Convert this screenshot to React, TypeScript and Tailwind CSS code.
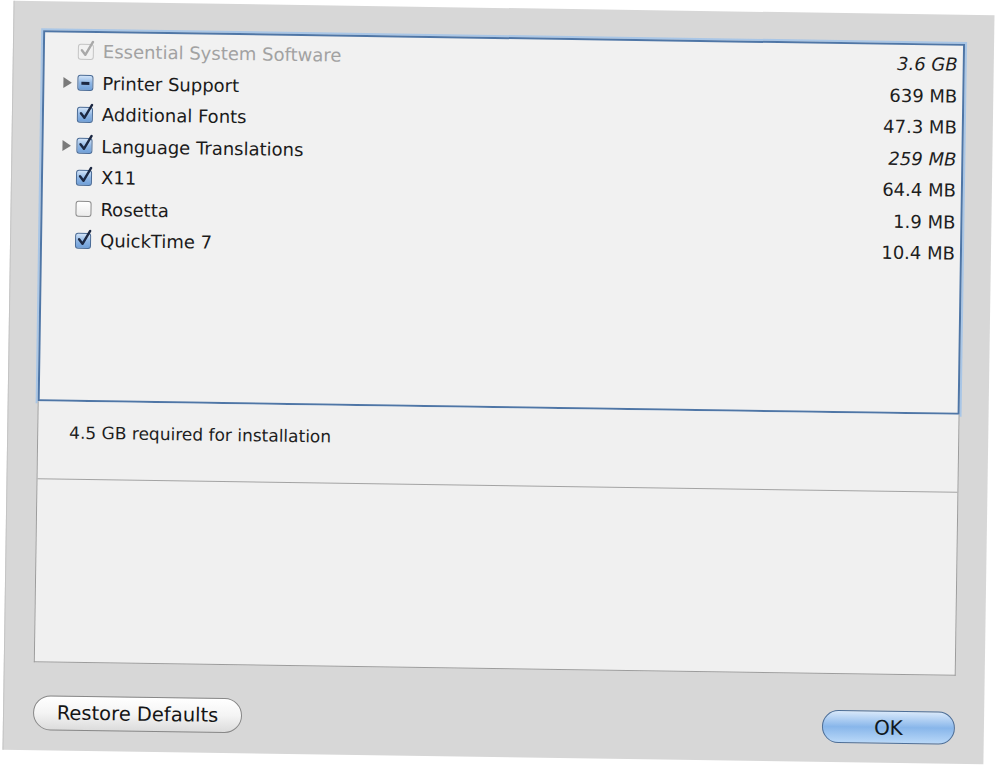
import React from 'react';

type CheckState = 'checked' | 'mixed' | 'unchecked' | 'disabled';

interface Item {
  name: string;
  size: string;
  state: CheckState;
  expandable?: boolean;
  italicSize?: boolean;
}

const items: Item[] = [
  { name: 'Essential System Software', size: '3.6 GB', state: 'disabled', italicSize: true },
  { name: 'Printer Support', size: '639 MB', state: 'mixed', expandable: true },
  { name: 'Additional Fonts', size: '47.3 MB', state: 'checked' },
  { name: 'Language Translations', size: '259 MB', state: 'checked', expandable: true, italicSize: true },
  { name: 'X11', size: '64.4 MB', state: 'checked' },
  { name: 'Rosetta', size: '1.9 MB', state: 'unchecked' },
  { name: 'QuickTime 7', size: '10.4 MB', state: 'checked' },
];

function CheckBox({ state }: { state: CheckState }) {
  const box =
    state === 'unchecked'
      ? 'border-[#8c8c8c] bg-gradient-to-b from-white to-[#ececec]'
      : state === 'disabled'
        ? 'border-[#c4c4c4] bg-[#f2f2f2]'
        : 'border-[#4a6b96] bg-gradient-to-b from-[#d2e4f8] via-[#8fb6e4] to-[#6f9fd8]';

  return (
    <div className="relative h-4 w-4 shrink-0">
      <div className={`h-4 w-4 rounded-[3px] border ${box}`} />
      {state === 'mixed' && (
        <div className="absolute left-[4px] top-[7px] h-[2.5px] w-[8px] bg-[#1c2842]" />
      )}
      {(state === 'checked' || state === 'disabled') && (
        <svg className="absolute -top-[4px] left-[1px]" width="18" height="18" viewBox="0 0 18 18">
          <path
            d="M3 10.5 L6.5 15 L14 2"
            fill="none"
            stroke={state === 'disabled' ? '#a9a9a9' : '#1c2842'}
            strokeWidth="2.4"
            strokeLinecap="round"
            strokeLinejoin="round"
          />
        </svg>
      )}
    </div>
  );
}

function Disclosure() {
  return (
    <svg width="10" height="12" viewBox="0 0 10 12">
      <path d="M1 0.5 L9.5 6 L1 11.5 Z" fill="#7a7a7a" />
    </svg>
  );
}

export default function App() {
  return (
    <div className="min-h-screen bg-white pl-[8px] pt-[8px]" style={{ fontFamily: '"DejaVu Sans", Verdana, sans-serif' }}>
      <div className="flex h-[749px] w-[981px] rotate-[0.85deg] flex-col border-l border-[#c4c4c4] bg-[#d7d7d7] px-[29px] pb-[20px] pt-[29px]">
        {/* component list */}
        <div className="h-[371px] border-2 border-[#4f76a6] bg-[#f1f1f1] pt-[3px] pr-[5px] shadow-[0_0_0_2px_#a9c6e6]">
          {items.map((item) => (
            <div key={item.name} className="flex h-[31.5px] items-center">
              <div className="flex w-[33px] justify-end pr-[5px]">
                {item.expandable && <Disclosure />}
              </div>
              <CheckBox state={item.state} />
              <div
                className={`ml-[9px] flex-1 text-[18px] ${item.state === 'disabled' ? 'text-[#a2a2a2]' : 'text-[#1b1b1b]'}`}
              >
                {item.name}
              </div>
              <div className={`text-[18px] text-[#1e1e1e] ${item.italicSize ? 'italic' : ''}`}>{item.size}</div>
            </div>
          ))}
        </div>

        {/* info panel */}
        <div className="flex h-[261px] flex-col border-x border-b border-[#9c9c9c] bg-[#f0f0f0]">
          <div className="h-[78px] border-b border-[#a3a3a3] pl-[31px] pt-[19px] text-[17px] text-[#1e1e1e]">
            4.5 GB required for installation
          </div>
          <div className="flex-1" />
        </div>

        <div className="mt-auto flex items-center justify-between">
          <button className="h-[35px] w-[209px] rounded-full border border-[#888] bg-gradient-to-b from-white via-[#f4f4f4] to-[#dcdcdc] text-[19.5px] text-[#151515] shadow-[inset_0_1px_0_#fff]">
            Restore Defaults
          </button>
          <button className="mb-[-4px] h-[33px] w-[133px] rounded-full border border-[#4e6f98] bg-gradient-to-b from-[#d8e8fa] via-[#88b6ea] to-[#b9d8f8] text-[20px] text-[#101820]">
            OK
          </button>
        </div>
      </div>
    </div>
  );
}
